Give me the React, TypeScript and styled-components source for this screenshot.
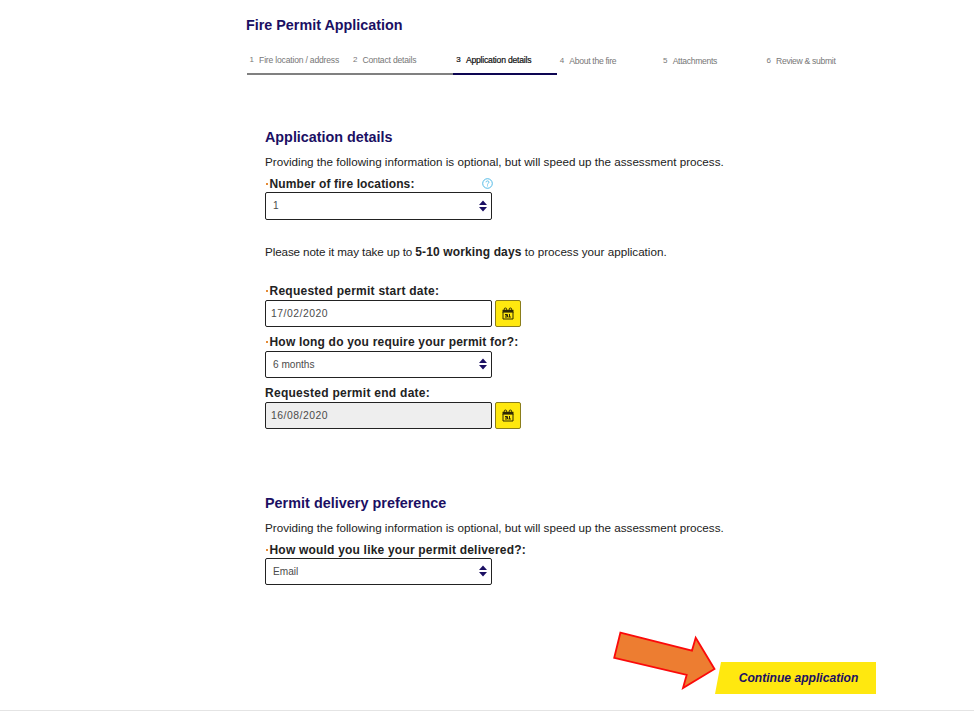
import React from "react";
import styled, { createGlobalStyle } from "styled-components";

const NAVY = "#1b0f63";
const YELLOW = "#ffe80f";

const GlobalStyle = createGlobalStyle`
  * { box-sizing: border-box; }
  body { margin: 0; background: #fff; }
  button, input { font-family: inherit; margin: 0; }
`;

const Page = styled.div`
  height: 711px;
  padding: 15px 98px 0 246px;
  border-bottom: 1px solid #e4e4e4;
  overflow: hidden;
  background: #fff;
  color: #222;
  font-family: "Liberation Sans", Arial, sans-serif;
`;

const Title = styled.h1`
  margin: 0;
  font-size: 14.35px;
  line-height: 20px;
  color: ${NAVY};
`;

const Steps = styled.ol`
  display: grid;
  grid-template-columns: repeat(6, 103.4px);
  margin: 15px 0 0 0.5px;
  padding: 0;
  list-style: none;
`;

type StepState = "done" | "active" | "todo";

const Step = styled.li<{ $state: StepState }>`
  display: flex;
  height: 25px;
  padding: ${(p) => (p.$state === "todo" ? "1px" : "0")} 0 0 3px;
  border-bottom: 2px solid
    ${(p) => ({ done: "#808080", active: "#0d0552", todo: "transparent" })[p.$state]};
  color: ${(p) => (p.$state === "active" ? "#111" : "#777")};
  font-size: 8.6px;
  line-height: 20px;
  letter-spacing: ${(p) => (p.$state === "todo" ? "-0.3px" : "-0.2px")};
  white-space: nowrap;
  -webkit-text-stroke: ${(p) => (p.$state === "active" ? "0.2px #111" : "0")};
`;

const StepNumber = styled.span`
  width: 9.6px;
  font-size: 8px;
`;

const Form = styled.main`
  padding-left: 19px;
`;

const Section = styled.section<{ $top: number }>`
  display: flex;
  flex-direction: column;
  align-items: flex-start;
  padding-top: ${(p) => p.$top}px;
`;

const Heading = styled.h2<{ $spacing?: number }>`
  margin: 0 0 7px;
  font-size: 14.35px;
  line-height: 20px;
  letter-spacing: ${(p) => p.$spacing ?? 0}px;
  color: ${NAVY};
`;

const Text = styled.p<{ $after: number }>`
  margin: 0 0 ${(p) => p.$after}px;
  font-size: 11.66px;
  line-height: 16px;
  white-space: nowrap;
`;

const Lead = styled.span`
  letter-spacing: -0.11px;
`;

const Strong = styled.strong`
  font-size: 12px;
  letter-spacing: 0.13px;
`;

const Field = styled.div<{ $after: number; $gap?: number }>`
  display: flex;
  flex-direction: column;
  gap: ${(p) => p.$gap ?? 0}px;
  width: 227px;
  margin-bottom: ${(p) => p.$after}px;
`;

const LabelRow = styled.div`
  display: flex;
  align-items: flex-end;
  justify-content: space-between;
  height: 16px;
`;

const Label = styled.label<{ $spacing: number }>`
  display: flex;
  font-size: 12px;
  font-weight: 700;
  line-height: 16px;
  letter-spacing: ${(p) => p.$spacing}px;
  white-space: nowrap;
`;

const Required = styled.span`
  flex: none;
  width: 2px;
  height: 2px;
  margin: 7px 1.5px 0 1px;
  background: #e58a35;
`;

const Select = styled.button<{ $height?: number }>`
  display: flex;
  align-items: center;
  justify-content: space-between;
  width: 227px;
  height: ${(p) => p.$height ?? 27}px;
  padding: 0 4px 1px 7px;
  border: 1px solid #222;
  border-radius: 2px;
  background: #fff;
  color: #4b4b4b;
  font-size: 10.1px;
`;

const DateRow = styled.div`
  display: flex;
  gap: 3px;
  width: 256px;
`;

const DateInput = styled.input`
  width: 227px;
  height: 27px;
  padding: 0 5px 1px;
  border: 1px solid #222;
  border-radius: 2px;
  background: #fff;
  color: #4b4b4b;
  font-size: 10.4px;
  letter-spacing: 0.5px;
  &:disabled {
    background: #eee;
    opacity: 1;
  }
`;

const CalendarButton = styled.button`
  display: grid;
  place-items: center;
  width: 26px;
  height: 27px;
  padding: 0 0 1px;
  border: 1px solid #8a7d1c;
  border-radius: 2px;
  background: ${YELLOW};
`;

const HelpIcon = styled.svg`
  margin: 0 -0.5px 3.5px 0;
`;

const Actions = styled.footer`
  position: relative;
  display: flex;
  justify-content: flex-end;
  padding-top: 77px;
`;

const Pointer = styled.svg`
  position: absolute;
  right: 159px;
  top: 45px;
`;

const Continue = styled.button`
  width: 161px;
  height: 32px;
  padding: 0 0 0 6px;
  border: 0;
  background: ${YELLOW};
  clip-path: polygon(6px 0, 100% 0, 100% 100%, 0 100%);
  color: ${NAVY};
  font-size: 12.1px;
  font-style: italic;
  font-weight: 700;
`;

const Arrows = () => (
  <svg width="8" height="12" viewBox="0 0 8 12" fill="#1b0f63">
    <path d="M4 0.5 8 5H0ZM0 7H8L4 11.5Z" />
  </svg>
);

const Help = () => (
  <HelpIcon width="11" height="11" viewBox="0 0 11 11" fill="none" stroke="#3fb2e3">
    <circle cx="5.5" cy="5.5" r="4.8" strokeWidth="0.9" />
    <path d="M4 4.3C4 2.5 7 2.5 7 4.2 7 5.3 5.5 5.1 5.5 6.6M5.5 7.4V8.4" strokeWidth="0.8" />
  </HelpIcon>
);

const Calendar = () => (
  <svg width="12" height="13" viewBox="0 0 12 13">
    <path d="M0.5 2.8H11.5V5.6H0.5Z" fill="#2e2905" />
    <path
      d="M1 5V12H11V5M2.2 3.5V2.2Q2.2 1 3.4 1T4.6 2.2V3.5M7.2 3.5V2.2Q7.2 1 8.4 1T9.6 2.2V3.5"
      fill="none"
      stroke="#2e2905"
      strokeWidth="1"
    />
    <path d="M3 7.5H5.5V10H3M3.5 8.7H5.5M7.5 7V10M6.4 10H8.9" fill="none" stroke="#2e2905" strokeWidth="1" />
  </svg>
);

const steps: { label: string; state: StepState }[] = [
  { label: "Fire location / address", state: "done" },
  { label: "Contact details", state: "done" },
  { label: "Application details", state: "active" },
  { label: "About the fire", state: "todo" },
  { label: "Attachments", state: "todo" },
  { label: "Review & submit", state: "todo" },
];

export default function App() {
  return (
    <>
      <GlobalStyle />
      <Page>
        <Title>Fire Permit Application</Title>
        <Steps>
          {steps.map((s, i) => (
            <Step key={s.label} $state={s.state}>
              <StepNumber>{i + 1}</StepNumber>
              {s.label}
            </Step>
          ))}
        </Steps>
        <Form>
          <Section $top={52}>
            <Heading>Application details</Heading>
            <Text $after={6}>
              Providing the following information is optional, but will speed up the assessment process.
            </Text>
            <Field $after={24}>
              <LabelRow>
                <Label $spacing={0.12}>
                  <Required />
                  Number of fire locations:
                </Label>
                <Help />
              </LabelRow>
              <Select $height={28}>
                1<Arrows />
              </Select>
            </Field>
            <Text $after={23}>
              <Lead>Please note it may take up to </Lead>
              <Strong>5-10 working days</Strong> to process your application.
            </Text>
            <Field $after={7} $gap={1}>
              <Label $spacing={0.25}>
                <Required />
                Requested permit start date:
              </Label>
              <DateRow>
                <DateInput value="17/02/2020" readOnly />
                <CalendarButton>
                  <Calendar />
                </CalendarButton>
              </DateRow>
            </Field>
            <Field $after={7} $gap={1}>
              <Label $spacing={0.2}>
                <Required />
                How long do you require your permit for?:
              </Label>
              <Select>
                6 months
                <Arrows />
              </Select>
            </Field>
            <Field $after={0} $gap={1}>
              <Label $spacing={0.27}>Requested permit end date:</Label>
              <DateRow>
                <DateInput value="16/08/2020" disabled />
                <CalendarButton>
                  <Calendar />
                </CalendarButton>
              </DateRow>
            </Field>
          </Section>
          <Section $top={64}>
            <Heading $spacing={0.04}>Permit delivery preference</Heading>
            <Text $after={6}>
              Providing the following information is optional, but will speed up the assessment process.
            </Text>
            <Field $after={0}>
              <Label $spacing={0.2}>
                <Required />
                How would you like your permit delivered?:
              </Label>
              <Select>
                Email
                <Arrows />
              </Select>
            </Field>
          </Section>
        </Form>
        <Actions>
          <Pointer width="105" height="62" viewBox="612 630 105 62">
            <path
              d="M620.4 632.7 692 650.6 695.7 637.8 714.5 669 683 688 686.7 674.8 614.2 657.8Z"
              fill="#ed7d31"
              stroke="#fb0a0a"
              strokeWidth="1.8"
            />
          </Pointer>
          <Continue>Continue application</Continue>
        </Actions>
      </Page>
    </>
  );
}
